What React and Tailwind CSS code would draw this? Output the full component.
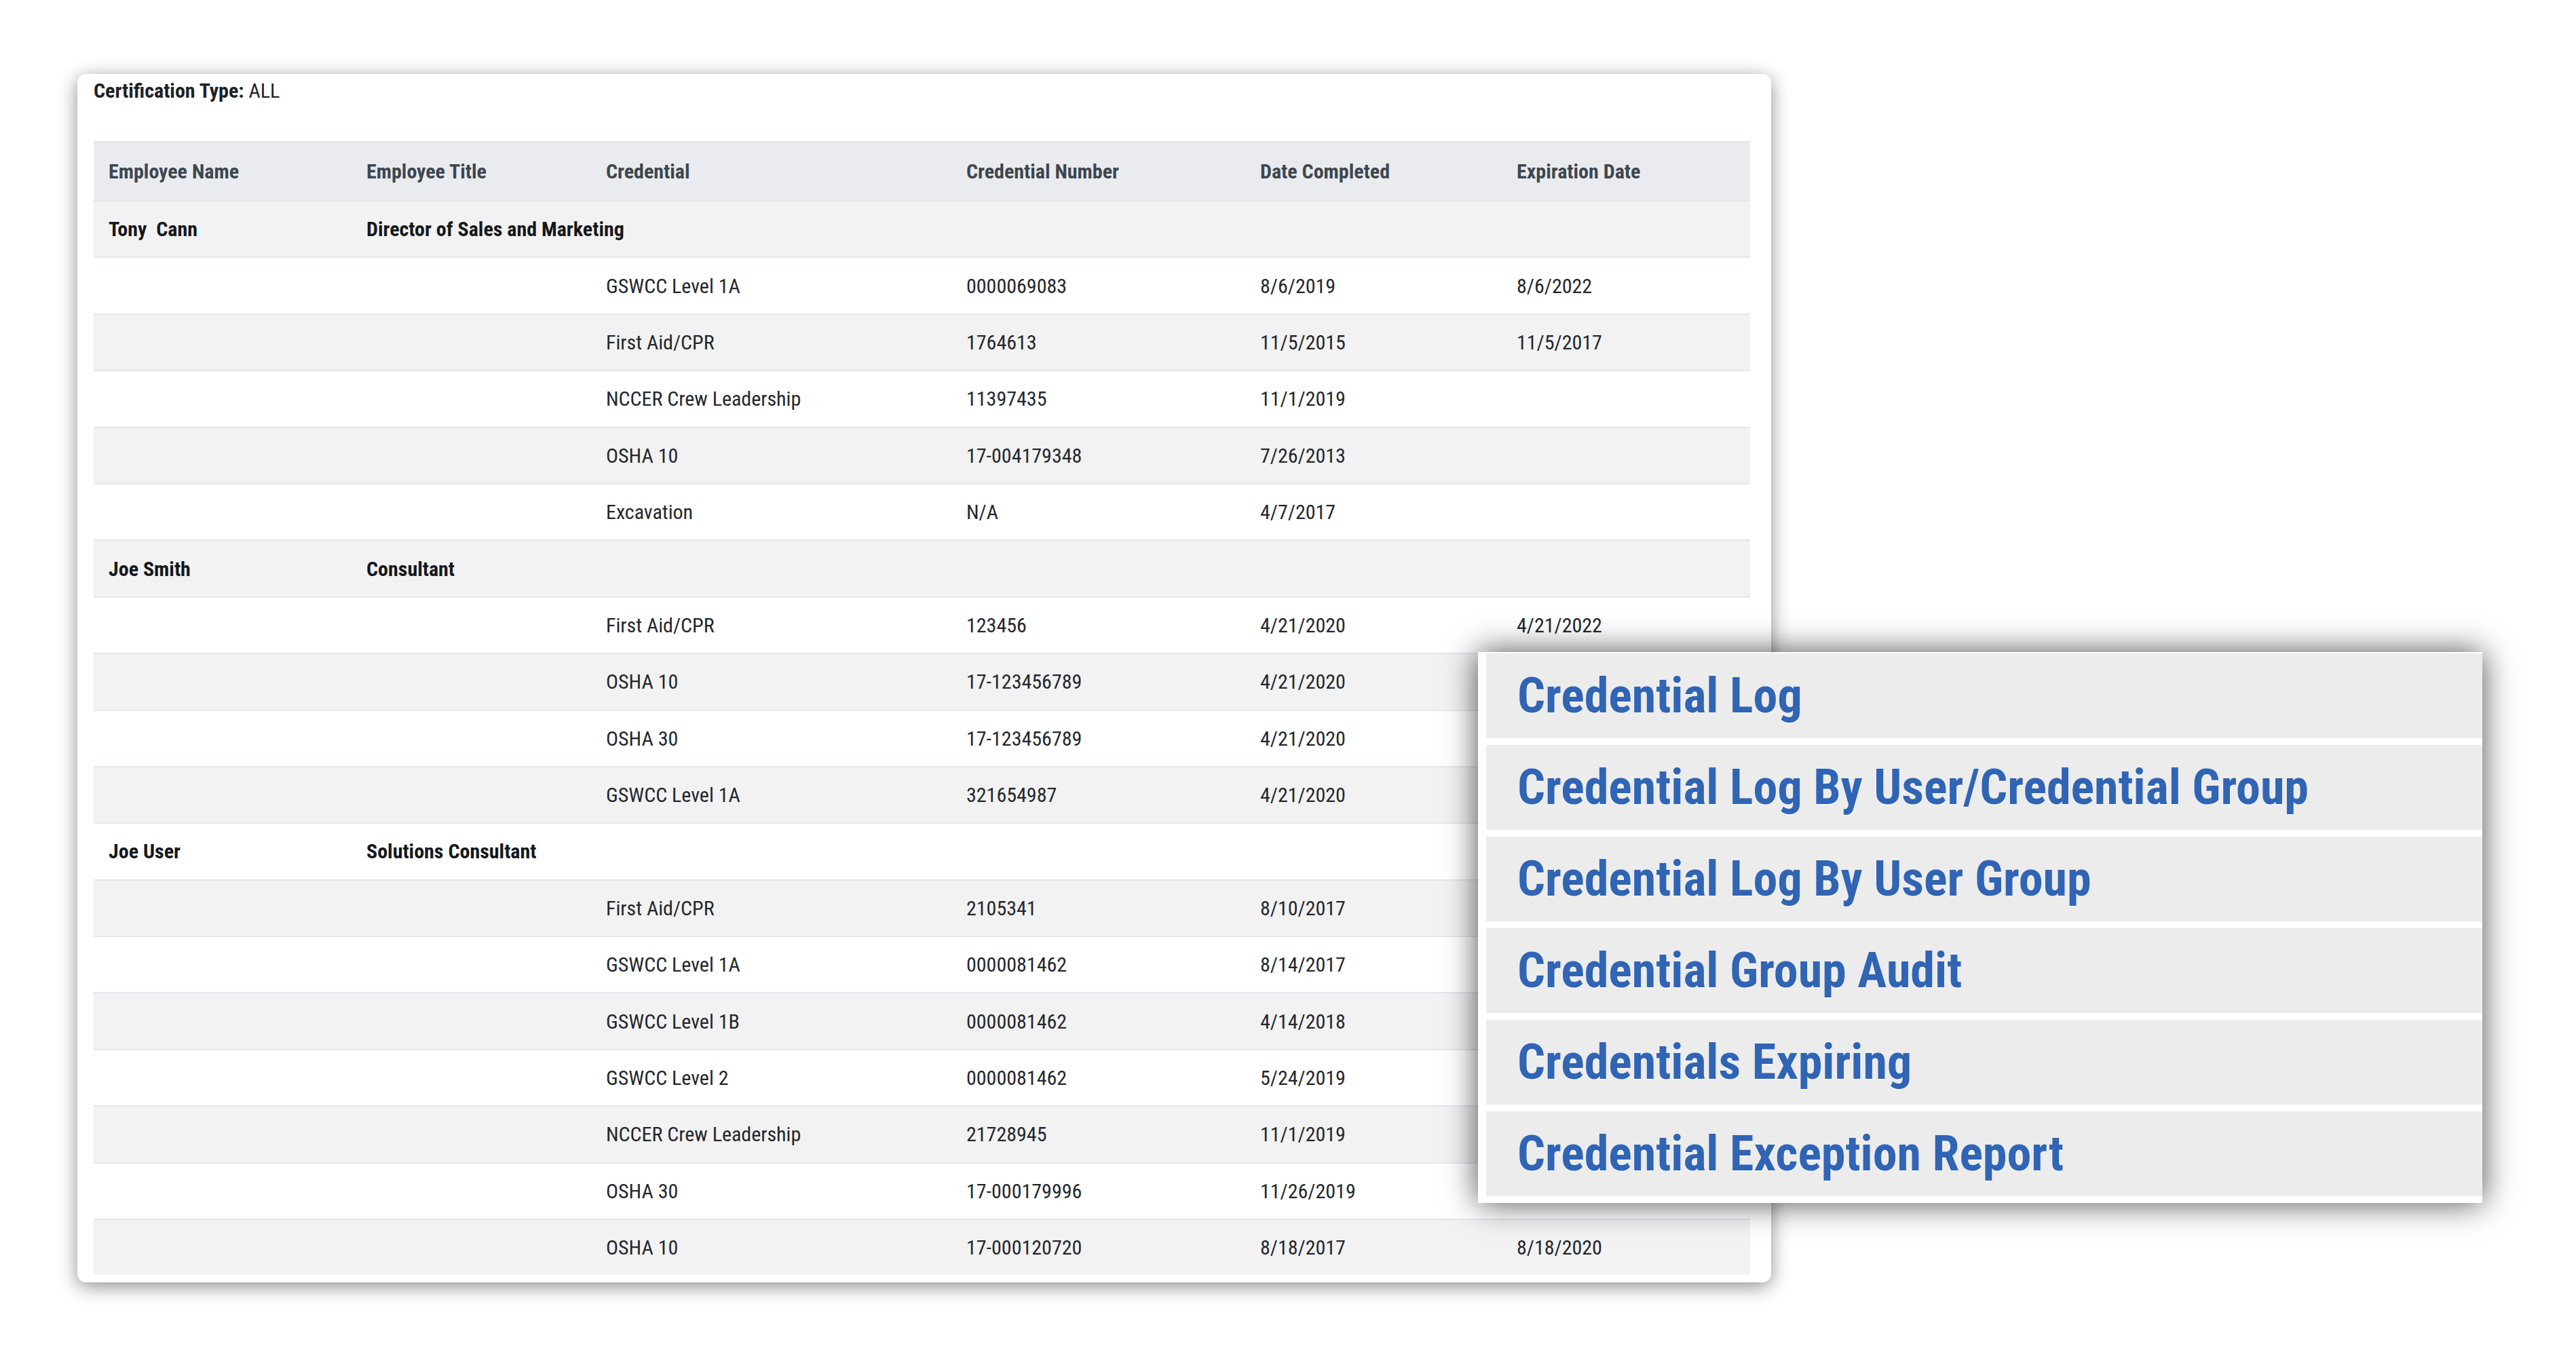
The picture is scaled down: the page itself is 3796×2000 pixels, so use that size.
const COLS = 'grid grid-cols-[380px_353px_531px_433px_378px_366px]'

const ROWS = [
  { name: 'Tony\u00a0\u00a0Cann', title: 'Director of Sales and Marketing' },
  { cred: 'GSWCC Level 1A', num: '0000069083', done: '8/6/2019', exp: '8/6/2022' },
  { cred: 'First Aid/CPR', num: '1764613', done: '11/5/2015', exp: '11/5/2017' },
  { cred: 'NCCER Crew Leadership', num: '11397435', done: '11/1/2019' },
  { cred: 'OSHA 10', num: '17-004179348', done: '7/26/2013' },
  { cred: 'Excavation', num: 'N/A', done: '4/7/2017' },
  { name: 'Joe Smith', title: 'Consultant' },
  { cred: 'First Aid/CPR', num: '123456', done: '4/21/2020', exp: '4/21/2022' },
  { cred: 'OSHA 10', num: '17-123456789', done: '4/21/2020' },
  { cred: 'OSHA 30', num: '17-123456789', done: '4/21/2020' },
  { cred: 'GSWCC Level 1A', num: '321654987', done: '4/21/2020' },
  { name: 'Joe User', title: 'Solutions Consultant' },
  { cred: 'First Aid/CPR', num: '2105341', done: '8/10/2017' },
  { cred: 'GSWCC Level 1A', num: '0000081462', done: '8/14/2017' },
  { cred: 'GSWCC Level 1B', num: '0000081462', done: '4/14/2018' },
  { cred: 'GSWCC Level 2', num: '0000081462', done: '5/24/2019' },
  { cred: 'NCCER Crew Leadership', num: '21728945', done: '11/1/2019' },
  { cred: 'OSHA 30', num: '17-000179996', done: '11/26/2019' },
  { cred: 'OSHA 10', num: '17-000120720', done: '8/18/2017', exp: '8/18/2020' },
]

const REPORTS = [
  'Credential Log',
  'Credential Log By User/Credential Group',
  'Credential Log By User Group',
  'Credential Group Audit',
  'Credentials Expiring',
  'Credential Exception Report',
]

const HEADERS = ['Employee Name', 'Employee Title', 'Credential', 'Credential Number', 'Date Completed', 'Expiration Date']

function Cell({ children, className = '' }) {
  return <div className={`pl-[22px] whitespace-nowrap ${className}`}>{children}</div>
}

export default function App() {
  return (
    <div className="relative w-[3796px] h-[2000px] bg-white overflow-hidden font-['Roboto_Condensed','DejaVu_Sans_Condensed',sans-serif]">
      {/* Report card */}
      <div className="ml-[114px] mt-[109px] w-[2496px] bg-white rounded-[13px] shadow-[0_6px_28px_rgba(0,0,0,0.45)] pl-[24px] pr-[31px] pt-[10px] pb-[11px]">
        <div className="h-[30px] leading-[30px] text-[30px] text-[#1d2127]">
          <span className="font-bold">Certification Type:</span> ALL
        </div>

        <div className="mt-[59px]">
          <div className={`${COLS} h-[87px] items-center bg-[#e9ebee] border-t-2 border-[#e1e4e8] text-[30px] font-bold text-[#3d4650]`}>
            {HEADERS.map(h => <Cell key={h}>{h}</Cell>)}
          </div>
          {ROWS.map((r, i) => (
            <div
              key={i}
              className={`${COLS} h-[83.4px] items-center border-t-2 border-[#e3e6ea] text-[30px] ${i % 2 === 0 ? 'bg-[#f2f2f2]' : 'bg-white'}`}
            >
              {r.name ? (
                <>
                  <Cell className="font-bold text-[#15181c]">{r.name}</Cell>
                  <Cell className="font-bold text-[#15181c]">{r.title}</Cell>
                </>
              ) : (
                <>
                  <Cell />
                  <Cell />
                  <Cell className="text-[#23272d]">{r.cred}</Cell>
                  <Cell className="text-[#23272d]">{r.num}</Cell>
                  <Cell className="text-[#23272d]">{r.done}</Cell>
                  <Cell className="text-[#23272d]">{r.exp}</Cell>
                </>
              )}
            </div>
          ))}
        </div>
      </div>

      {/* Reports menu overlay */}
      <div className="absolute left-[2178px] top-[961px] w-[1480px] bg-white shadow-[0_0_45px_rgba(0,0,0,0.7)] pt-[2px] pl-[12px] pb-[10px] flex flex-col gap-[10px]">
        {REPORTS.map(r => (
          <div key={r} className="h-[125px] bg-[#ececec] flex items-center pl-[46px]">
            <span className="text-[72px] font-bold text-[#3064b4] [text-shadow:0_1px_1px_#fff] whitespace-nowrap">{r}</span>
          </div>
        ))}
      </div>
    </div>
  )
}
